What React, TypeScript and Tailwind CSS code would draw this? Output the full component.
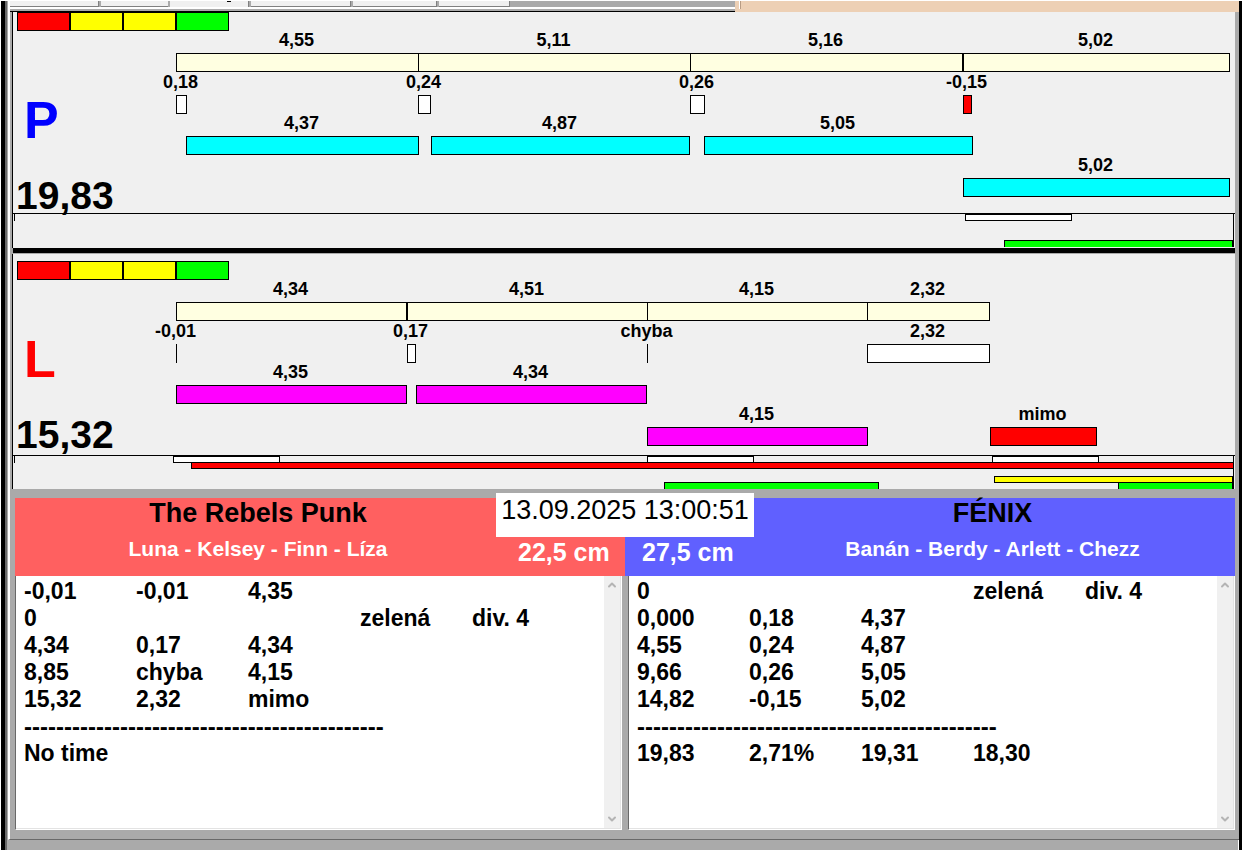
import { ChevronDown, ChevronUp } from 'lucide-react';

interface Segment {
  from: number;
  to: number;
  fill: string;
  label?: string;
}

interface LaneData {
  letter: string;
  letterColor: string;
  time: string;
  rows: Segment[][];
  strips: Segment[][];
}

// widths of the two scales that the segment positions refer to
const RUN_SCALE = 1059;
const STRIP_SCALE = 1222;

const CREAM = 'border border-black bg-[#ffffe1]';
const WHITE = 'border border-black bg-white';
const RED = 'border border-black bg-[#ff0000]';
const CYAN = 'border border-black bg-[#00ffff]';
const MAGENTA = 'border border-black bg-[#ff00ff]';
const YELLOW = 'border border-black bg-[#ffff00]';
const GREEN = 'border border-b-0 border-black bg-[#00ff00]';
const LINE = 'bg-black';

const rightLane: LaneData = {
  letter: 'P',
  letterColor: 'text-[#0000ff]',
  time: '19,83',
  rows: [
    [
      { from: 0, to: 243, fill: CREAM, label: '4,55' },
      { from: 242, to: 515, fill: CREAM, label: '5,11' },
      { from: 514, to: 787, fill: CREAM, label: '5,16' },
      { from: 787, to: 1054, fill: CREAM, label: '5,02' },
    ],
    [
      { from: 0, to: 11, fill: WHITE, label: '0,18' },
      { from: 242, to: 255, fill: WHITE, label: '0,24' },
      { from: 514, to: 529, fill: WHITE, label: '0,26' },
      { from: 787, to: 796, fill: RED, label: '-0,15' },
    ],
    [
      { from: 10, to: 243, fill: CYAN, label: '4,37' },
      { from: 255, to: 514, fill: CYAN, label: '4,87' },
      { from: 528, to: 797, fill: CYAN, label: '5,05' },
    ],
    [{ from: 787, to: 1054, fill: CYAN, label: '5,02' }],
  ],
  strips: [
    [{ from: 952, to: 1059, fill: WHITE }],
    [],
    [],
    [{ from: 991, to: 1220, fill: GREEN }],
  ],
};

const leftLane: LaneData = {
  letter: 'L',
  letterColor: 'text-[#ff0000]',
  time: '15,32',
  rows: [
    [
      { from: 0, to: 231, fill: CREAM, label: '4,34' },
      { from: 231, to: 472, fill: CREAM, label: '4,51' },
      { from: 471, to: 692, fill: CREAM, label: '4,15' },
      { from: 691, to: 814, fill: CREAM, label: '2,32' },
    ],
    [
      { from: 0, to: 1, fill: LINE, label: '-0,01' },
      { from: 231, to: 240, fill: WHITE, label: '0,17' },
      { from: 471, to: 472, fill: LINE, label: 'chyba' },
      { from: 691, to: 814, fill: WHITE, label: '2,32' },
    ],
    [
      { from: 0, to: 231, fill: MAGENTA, label: '4,35' },
      { from: 240, to: 471, fill: MAGENTA, label: '4,34' },
    ],
    [
      { from: 471, to: 692, fill: MAGENTA, label: '4,15' },
      { from: 814, to: 921, fill: RED, label: 'mimo' },
    ],
  ],
  strips: [
    [
      { from: 160, to: 267, fill: WHITE },
      { from: 634, to: 741, fill: WHITE },
      { from: 979, to: 1086, fill: WHITE },
    ],
    [{ from: 178, to: 1221, fill: RED }],
    [{ from: 981, to: 1220, fill: YELLOW }],
    [
      { from: 651, to: 866, fill: GREEN },
      { from: 1105, to: 1220, fill: GREEN },
    ],
  ],
};

const DASHES = '-'.repeat(45);

const leftLog = [
  ['-0,01', '-0,01', '4,35', '', ''],
  ['0', '', '', 'zelená', 'div. 4'],
  ['4,34', '0,17', '4,34', '', ''],
  ['8,85', 'chyba', '4,15', '', ''],
  ['15,32', '2,32', 'mimo', '', ''],
  [DASHES],
  ['No time', '', '', '', ''],
];

const rightLog = [
  ['0', '', '', 'zelená', 'div. 4'],
  ['0,000', '0,18', '4,37', '', ''],
  ['4,55', '0,24', '4,87', '', ''],
  ['9,66', '0,26', '5,05', '', ''],
  ['14,82', '-0,15', '5,02', '', ''],
  [DASHES],
  ['19,83', '2,71%', '19,31', '18,30', ''],
];

const rowHeights = ['h-[41px]', 'h-[42px]', 'h-[41px]', 'h-[42px]'];
const stripTops = ['top-0', 'top-[6px]', 'top-[20px]', 'top-[26px]'];

const span = (s: Segment, scale: number) => ({
  left: `${(s.from / scale) * 100}%`,
  width: `${((s.to - s.from) / scale) * 100}%`,
});

const Lights = () => (
  <div className="ml-1 flex h-[19px]">
    <div className="w-[53px] border border-black bg-[#ff0000]" />
    <div className="w-[53px] border border-black bg-[#ffff00]" />
    <div className="w-[53px] border border-black bg-[#ffff00]" />
    <div className="w-[53px] border border-black bg-[#00ff00]" />
  </div>
);

interface LaneProps {
  lane: LaneData;
  className: string;
  sideClass: string;
  chartClass: string;
}

const Lane = ({ lane, className, sideClass, chartClass }: LaneProps) => (
  <section className={`border-l border-black bg-[#f0f0f0] ${className}`}>
    <Lights />
    <div className="flex">
      <div className={`flex w-[163px] shrink-0 flex-col justify-end gap-[33px] font-bold ${sideClass}`}>
        <div className={`pl-[11px] text-[52px] leading-[52px] ${lane.letterColor}`}>{lane.letter}</div>
        <div className="pl-[3px] text-[39px] leading-[34px]">{lane.time}</div>
      </div>
      <div className={`flex-1 ${chartClass}`}>
        {lane.rows.map((row, i) => (
          <div key={i} className={`relative ${rowHeights[i]}`}>
            {row.map((s) => (
              <div
                key={s.from}
                className="absolute bottom-0 flex flex-col items-center whitespace-nowrap"
                style={span(s, RUN_SCALE)}
              >
                <span className="mb-[3px] pr-[2px] text-lg leading-5 font-bold">{s.label}</span>
                <div className={`h-[19px] w-full ${s.fill}`} />
              </div>
            ))}
          </div>
        ))}
      </div>
    </div>
    <div className="relative h-[34px] overflow-hidden border-t border-black">
      <div className="ml-px h-[7px] w-px bg-black" />
      {lane.strips.map((strip, i) =>
        strip.map((s) => (
          <div
            key={`${i}-${s.from}`}
            className={`absolute h-[7px] ${stripTops[i]} ${s.fill}`}
            style={span(s, STRIP_SCALE)}
          />
        )),
      )}
      <div className="absolute top-0 right-px bottom-0 w-px bg-black" />
    </div>
  </section>
);

const Log = ({ rows }: { rows: string[][] }) => (
  <div className="flex border-r border-b border-l border-r-white border-b-white border-l-[#696969] bg-white">
    <div className="min-w-0 flex-1 overflow-hidden border-b border-[#e3e3e3] pt-[2px] pl-2">
      <table className="w-[560px] table-fixed border-collapse text-[23px] leading-[27px] font-bold">
        <tbody>
          {rows.map((row, i) => (
            <tr key={i} className="h-[27px]">
              {row.length === 1 ? (
                <td colSpan={5} className="p-0 text-2xl leading-[27px]">
                  {row[0]}
                </td>
              ) : (
                row.map((cell, j) => (
                  <td key={j} className="p-0 whitespace-nowrap">
                    {cell}
                  </td>
                ))
              )}
            </tr>
          ))}
        </tbody>
      </table>
    </div>
    <div className="flex w-[17px] flex-col items-center justify-between border-r border-b border-[#e3e3e3] bg-[#f0f0f0] py-[3px] text-[#b4b4b4]">
      <ChevronUp size={12} strokeWidth={4} />
      <ChevronDown size={12} strokeWidth={4} />
    </div>
  </div>
);

const TabStrip = () => (
  <div className="flex h-[11px] bg-[#edd0b5]">
    <div className="flex w-[59%] flex-col border-b border-black bg-[#aaaaaa]">
      <div className="flex h-[6px] gap-[2px]">
        <div className="w-[89px] border-r border-b border-[#808080] bg-[#f0f0f0]" />
        <div className="w-[67px] border-b border-[#808080] bg-[#f0f0f0]" />
        <div className="h-2 w-[79px] border-r border-[#808080] bg-[#f0f0f0] pl-[57px]">
          <div className="h-px w-[4px] bg-black" />
        </div>
        <div className="w-[100px] border-r border-b border-[#808080] bg-[#f0f0f0]" />
        <div className="w-[84px] border-r border-b border-[#808080] bg-[#f0f0f0]" />
        <div className="w-[71px] border-r border-b border-[#808080] bg-[#f0f0f0]" />
      </div>
      <div className="h-[2px] bg-white" />
    </div>
    <div className="ml-[4px] h-[8px] w-[2px] border-r border-[#b89c84] bg-white" />
  </div>
);

const App = () => {
  return (
    <div className="flex min-h-screen flex-col border-t border-l border-white bg-black pr-[3px] pl-[4px] font-['Liberation_Sans',Arial,sans-serif] text-black">
      <div className="flex flex-1 flex-col border-l-2 border-[#696969] bg-[#aaaaaa] pl-px">
        <div className="flex flex-1 flex-col border-b border-l-2 border-b-[#696969] border-l-white">
          <TabStrip />
          <div className="flex flex-1 flex-col pr-[4px] pl-[2px]">
            <Lane lane={rightLane} className="pb-px" sideClass="pb-0" chartClass="pb-4" />
            <div className="ml-px h-[5px] bg-black" />
            <div className="h-px" />
            <Lane lane={leftLane} className="pt-[7px]" sideClass="pb-[3px]" chartClass="pb-[9px]" />
            <div className="relative mt-[9px] ml-[3px] grid grid-cols-2 text-white">
              <div className="flex h-[78px] bg-[#ff6060] font-bold">
                <div className="flex-1 text-center">
                  <h2 className="text-[27px] leading-[30px] text-black">The Rebels Punk</h2>
                  <p className="mt-[9px] text-[21px] leading-6">Luna - Kelsey - Finn - Líza</p>
                </div>
                <div className="w-[124px] pt-10 pl-[17px] text-[25px] leading-7">22,5 cm</div>
              </div>
              <div className="flex h-[78px] bg-[#6060ff] font-bold">
                <div className="w-[125px] pt-10 pl-[17px] text-[25px] leading-7">27,5 cm</div>
                <div className="flex-1 text-center">
                  <h2 className="text-[27px] leading-[30px] text-black">FÉNIX</h2>
                  <p className="mt-[9px] text-[21px] leading-6">Banán - Berdy - Arlett - Chezz</p>
                </div>
              </div>
              <time className="absolute -top-[5px] left-1/2 h-[44px] w-[258px] -translate-x-1/2 bg-white text-center text-[27px] leading-[34px] text-black">
                13.09.2025 13:00:51
              </time>
            </div>
            <div className="ml-[3px] grid flex-1 grid-cols-2 gap-[6px] pb-[9px]">
              <Log rows={leftLog} />
              <Log rows={rightLog} />
            </div>
          </div>
        </div>
        <div className="h-[10px] border-r border-white" />
      </div>
    </div>
  );
};

export default App;
